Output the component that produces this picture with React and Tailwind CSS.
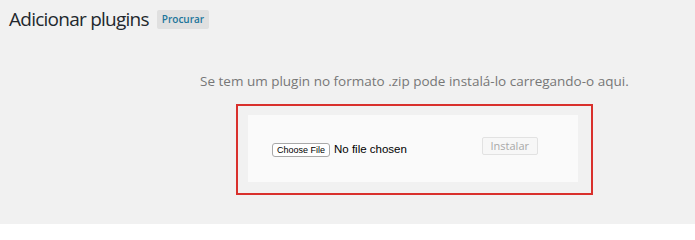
import { useState } from "react";

export default function App() {
  const [fileName, setFileName] = useState("");

  return (
    <div className="w-[695px] h-[224px] bg-[#f1f1f1] overflow-hidden font-['Open_Sans',sans-serif] text-[#23282d]">
      <div className="flex items-center gap-[8px] pl-[9px] pt-[6px]">
        <h1 className="text-[19px] leading-[26px] font-normal tracking-[-0.75px]">Adicionar plugins</h1>
        <button className="h-[19px] px-[5px] bg-[#e0e0e0] text-[#21759b] text-[10px] font-semibold leading-[19px] rounded-[2px] mt-[1px]">
          Procurar
        </button>
      </div>

      <p className="pl-[200px] pt-[39px] text-[13.5px] leading-[20px] text-[#777]">
        Se tem um plugin no formato .zip pode instalá-lo carregando-o aqui.
      </p>

      <div className="ml-[236px] mt-[13px] w-[357px] h-[91px] border-2 border-[#d9302c] pl-[10px] pt-[9px]">
        <form className="w-[330px] h-[67px] bg-[#fafafa] flex items-center pl-[24px] pr-[40px]">
          <label className="flex items-center mt-[2px] cursor-pointer">
            <span className="h-[14px] px-[4px] border border-[#a9a9a9] rounded-[3px] bg-white text-[9px] leading-[12px] text-black font-['Liberation_Sans',sans-serif]">
              Choose File
            </span>
            <span className="ml-[4px] text-[11.5px] text-black font-['Liberation_Sans',sans-serif]">
              {fileName || "No file chosen"}
            </span>
            <input
              type="file"
              className="hidden"
              onChange={(e) => setFileName(e.target.files?.[0]?.name || "")}
            />
          </label>
          <button
            type="button"
            disabled
            className="ml-auto mb-[5px] h-[18px] px-[8px] border border-[#e2e2e2] rounded-[2px] bg-[#f7f7f7] text-[11px] leading-[16px] text-[#a8a8a8]"
          >
            Instalar
          </button>
        </form>
      </div>
    </div>
  );
}
